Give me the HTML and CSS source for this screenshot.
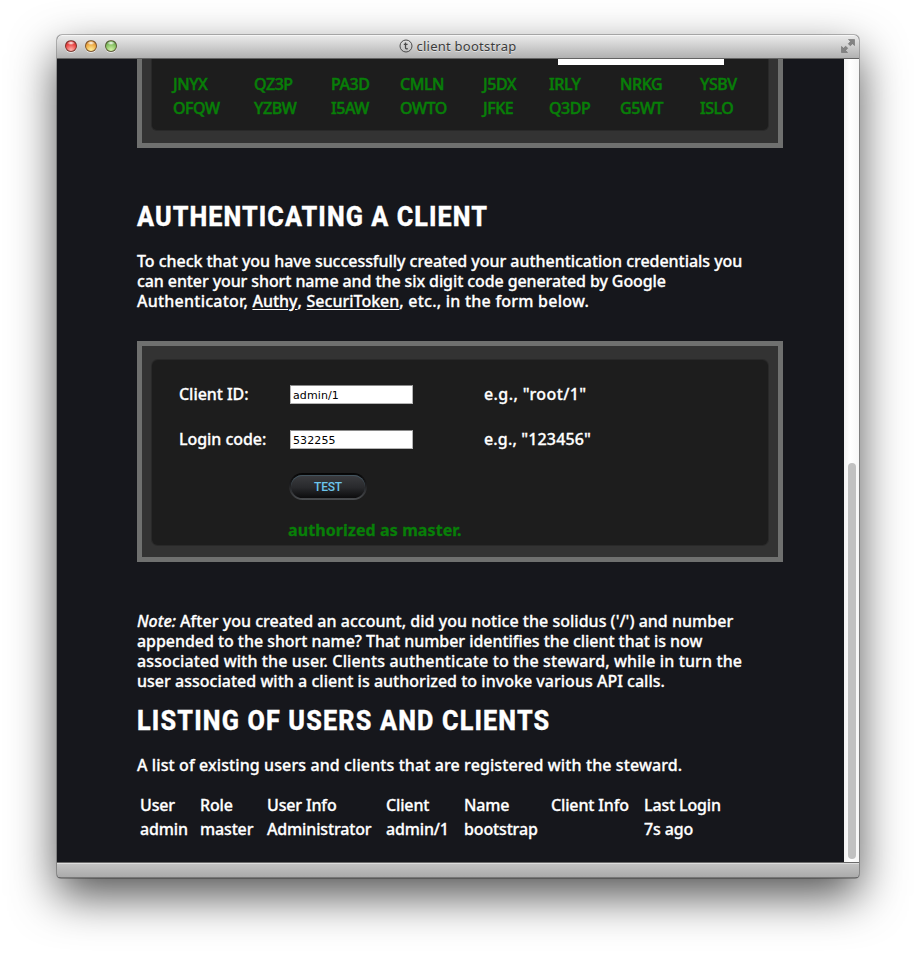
FILE: index.html
```
<!DOCTYPE html>
<html lang="en">
<head>
<meta charset="utf-8">
<title>client bootstrap</title>
<link rel="stylesheet" href="styles.css">
</head>
<body>
<div class="window">
  <header class="titlebar">
    <div class="lights"><i class="light red"></i><i class="light amber"></i><i class="light green"></i></div>
    <div class="title">
      <svg width="14" height="14" viewBox="0 0 14 14" fill="none" stroke="#4a4a4a"><circle cx="7" cy="7" r="6"/><path d="M6.5 3.5v5.2q0 1.5 2.3 1M4.8 5.4h3.8" stroke-width="1.3"/></svg>
      <span>client bootstrap</span>
    </div>
    <svg class="expand" width="14" height="14" viewBox="0 0 14 14" fill="#838383"><path d="M7.5 .5h6v6l-2-1.8-2.2 2.1-2-2 2.2-2.2z" stroke="#707070" stroke-width=".6"/><path d="M.5 7.5l2 1.8 2.2-2.1 2 2-2.2 2.2 2 2.1h-6z" stroke="#707070" stroke-width=".6"/></svg>
  </header>
  <div class="viewport">
    <main class="page">
      <section class="panel codes-panel">
        <div class="inner codes-inner">
          <div class="qr-edge"></div>
          <div class="codes">
            <span>JNYX</span><span>QZ3P</span><span>PA3D</span><span>CMLN</span><span>J5DX</span><span>IRLY</span><span>NRKG</span><span>YSBV</span>
            <span>OFQW</span><span>YZBW</span><span>I5AW</span><span>OWTO</span><span>JFKE</span><span>Q3DP</span><span>G5WT</span><span>ISLO</span>
          </div>
        </div>
      </section>
      <h1 class="h-auth">AUTHENTICATING A CLIENT</h1>
      <p class="intro"><span class="a1">To check that you have successfully created your authentication credentials you</span><br><span class="a2">can enter your short name and the six digit code generated by Google</span><br><span class="a3">Authenticator, <a href="#">Authy</a>, <a href="#">SecuriToken</a>, etc., in the form below.</span></p>
      <section class="panel form-panel">
        <form class="inner form">
          <label>Client ID:</label><input type="text" value="admin/1"><span class="ex1">e.g., "root/1"</span>
          <label>Login code:</label><input type="text" value="532255"><span class="ex2">e.g., "123456"</span>
          <button type="button">TEST</button>
          <output>authorized as master.</output>
        </form>
      </section>
      <p class="note"><span class="n1"><em>Note:</em> After you created an account, did you notice the solidus ('/') and number</span><br><span class="n2">appended to the short name? That number identifies the client that is now</span><br><span class="n3">associated with the user. Clients authenticate to the steward, while in turn the</span><br><span class="n4">user associated with a client is authorized to invoke various API calls.</span></p>
      <h1 class="h-list">LISTING OF USERS AND CLIENTS</h1>
      <p class="list">A list of existing users and clients that are registered with the steward.</p>
      <div class="users">
        <span>User</span><span>Role</span><span>User Info</span><span>Client</span><span>Name</span><span>Client Info</span><span>Last Login</span>
        <span>admin</span><span>master</span><span>Administrator</span><span>admin/1</span><span>bootstrap</span><span></span><span>7s ago</span>
      </div>
    </main>
    <div class="scroll"><div class="thumb"></div></div>
  </div>
  <footer class="bottombar"></footer>
</div>
</body>
</html>
```
FILE: styles.css
```
* { box-sizing: border-box; }
body { margin: 0; padding: 35px 57px 0 57px; height: 957px; overflow: hidden; background: #fff; font: 500 16px/20px "Noto Sans", sans-serif; color: #fff; }
.window { width: 802px; height: 843px; border-radius: 5px 5px 4px 4px; box-shadow: 0 0 0 1px rgba(0,0,0,.25), 0 18px 46px rgba(0,0,0,.68); display: flex; flex-direction: column; overflow: hidden; background: #16171c; }
.titlebar { height: 24px; flex: none; position: relative; display: flex; align-items: center; justify-content: center; background: linear-gradient(#e9e9e9, #b1b1b1); border-bottom: 1px solid #636363; border-top: 1px solid #f6f6f6; color: #3c3c3c; }
.lights { position: absolute; left: 8px; top: 4px; display: flex; gap: 8px; }
.light { width: 12px; height: 12px; border-radius: 50%; border: 1px solid rgba(60,30,20,.6); box-shadow: 0 1px 0 rgba(255,255,255,.6); }
.red { background: radial-gradient(ellipse 4px 2px at 50% 20%, #fff, transparent), radial-gradient(circle at 50% 90%, #ffb5ad, #ea4544 60%, #b22c2c); }
.amber { background: radial-gradient(ellipse 4px 2px at 50% 20%, #fff, transparent), radial-gradient(circle at 50% 90%, #fff09a, #eda842 60%, #b6742a); }
.green { background: radial-gradient(ellipse 4px 2px at 50% 20%, #fff, transparent), radial-gradient(circle at 50% 90%, #d3f5a8, #84bf61 60%, #4e873c); }
.title { display: flex; align-items: center; gap: 4px; margin: -2px 0 0 -1px; font-size: 13px; font-weight: 400; letter-spacing: .24px; text-shadow: 0 1px 0 rgba(255,255,255,.5); }
.title svg { display: block; }
.expand { position: absolute; right: 4px; top: 3px; }
.viewport { flex: 1; display: flex; min-height: 0; }
.page { flex: 1; padding-left: 80px; overflow: hidden; -webkit-text-stroke-width: .3px; }
.panel { width: 646px; padding: 5px; background: #6f706f; display: flex; }
.inner { flex: 1; background: #1d1d1d; box-shadow: 0 0 0 1px #292929; border-radius: 6px; }
/* The frame between the grey edge and the dark well */
.panel { background: linear-gradient(#333, #333) content-box, #6f706f; }
.codes-panel { height: 89px; padding-top: 0; }
.codes-inner { margin: 0 10px 13px; border-radius: 0 0 5px 5px; }
.qr-edge { width: 166px; height: 6px; margin-left: 406px; background: #fff; }
.codes { display: grid; grid-template-columns: 81px 77px 69px 83px 66px 71px 80px 60px; grid-auto-rows: 24px; line-height: 24px; padding: 7px 0 0 21px; color: #087f08; letter-spacing: -.45px; -webkit-text-stroke-width: .5px; }
.codes span { white-space: nowrap; }
h1 { font: 800 28px/32px Roboto, sans-serif; margin: 0; white-space: nowrap; transform: scaleX(.9); transform-origin: 0 50%; }
.h-auth { margin-top: 53px; letter-spacing: 1.18px; }
.h-list { margin-top: 14px; letter-spacing: 1.28px; }
p { margin: 0; white-space: nowrap; }
.intro { margin-top: 18px; }
.a1 { letter-spacing: -.04px; } .a2 { letter-spacing: -.1px; } .a3 { letter-spacing: .23px; }
.intro a { color: #fff; text-underline-offset: 2px; letter-spacing: 0; }
.form-panel { margin-top: 30px; height: 221px; }
.form { margin: 14px 10px 12px; display: grid; grid-template-columns: 111px 194px 1fr; grid-template-rows: 45px 45px 48px 40px; align-items: center; padding: 12px 0 0 27px; }
.form label, .form span { padding-bottom: 2px; }
.form label { letter-spacing: -.05px; }
.form .ex1 { letter-spacing: .4px; }
.form .ex2 { letter-spacing: .15px; }
.form input { width: 123px; height: 19px; border: 1px solid #b4b4b4; border-top-color: #8a8a8a; padding: 1px 2px 0; background: #fff; color: #000; font: 11px "DejaVu Sans", sans-serif; letter-spacing: .1px; border-radius: 0; -webkit-text-stroke-width: 0; }
.form button { grid-column: 2; width: 78px; height: 27px; margin-left: -1px; border: 2px solid transparent; border-radius: 14px; background: linear-gradient(#3b3c40, #28292c 55%, #0c0c0d) padding-box, linear-gradient(#050505, #1c1c1e 40%, #4a4d50) border-box; box-shadow: inset 0 1px 0 #42545e; color: #6cc5ec; font: 500 12px/20px Roboto, sans-serif; letter-spacing: -.2px; padding: 1px 0 0; -webkit-text-stroke-width: 0; }
.form output { grid-column: 2 / 4; margin-left: -2px; color: #087f08; font-weight: 700; letter-spacing: .1px; white-space: nowrap; }
.note { margin-top: 49px; }
.n1 { letter-spacing: .02px; } .n2 { letter-spacing: -.05px; } .n3 { letter-spacing: .13px; } .n4 { letter-spacing: .02px; }
.list { margin-top: 18px; letter-spacing: .1px; }
.users { display: grid; grid-template-columns: 60px 67px 119px 78px 87px 93px 90px; grid-auto-rows: 24px; line-height: 24px; padding: 18px 0 0 3px; letter-spacing: -.15px; white-space: nowrap; }
.scroll { width: 15px; flex: none; background: linear-gradient(90deg, #f1f1f1, #fff 40%, #f6f6f6); padding: 404px 3px 3px 4px; }
.thumb { height: 396px; border-radius: 4px; background: #c1c1c1; }
.bottombar { height: 16px; flex: none; background: linear-gradient(#c4c4c4, #ababab); border-top: 1px solid #6b6b6b; box-shadow: inset 0 1px 0 #dedede; border-bottom: 1px solid #777; }
```
